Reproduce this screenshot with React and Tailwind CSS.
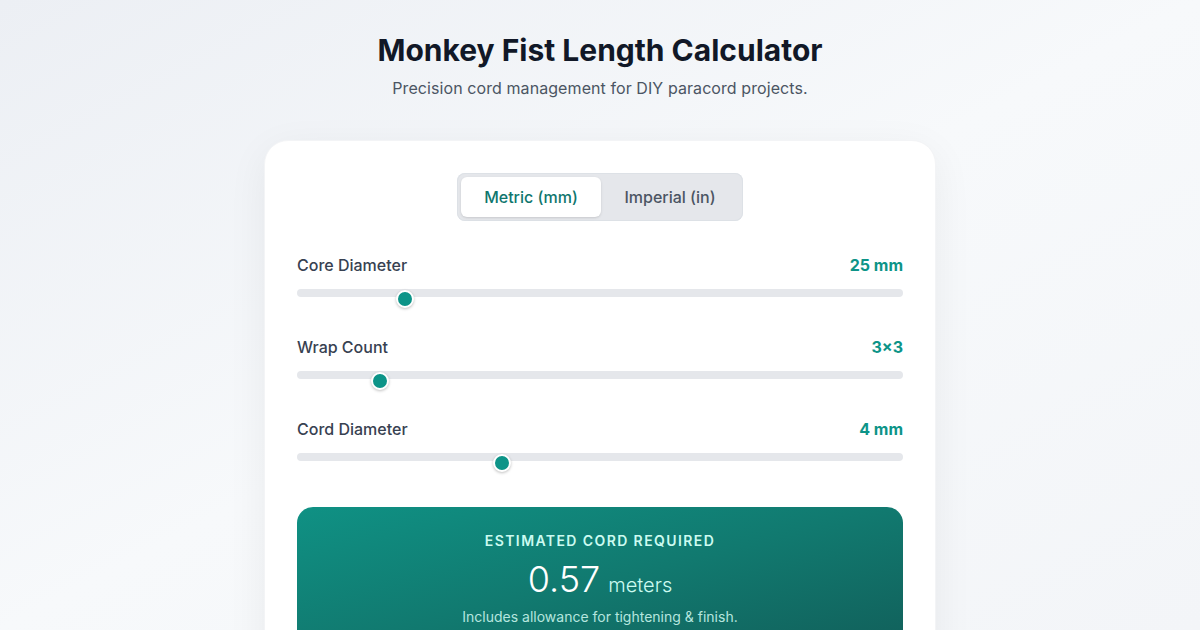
export default function App() {
  const rows = [
    { label: "Core Diameter", value: "25 mm", left: "left-[99px]" },
    { label: "Wrap Count", value: "3×3", left: "left-[74px]" },
    { label: "Cord Diameter", value: "4 mm", left: "left-[196px]" },
  ];
  return (
    <div
      className="w-[1200px] h-[630px] overflow-hidden bg-gradient-to-br from-[#eceff4] via-[#f7f9fb] to-[#f3f5f8] flex flex-col items-center pt-8"
      style={{ fontFamily: "Inter, 'Noto Sans', sans-serif" }}
    >
      <h1 className="text-[30px] leading-9 font-bold text-[#111827]">
        Monkey Fist Length Calculator
      </h1>
      <p className="mt-2 text-base leading-6 text-[#4b5563] tracking-[0.005em]">
        Precision cord management for DIY paracord projects.
      </p>
      <div className="mt-10 w-[672px] bg-white rounded-3xl border border-[#f3f4f6] shadow-[0_10px_40px_rgba(15,23,42,0.06)] p-8 shrink-0">
        <div className="flex justify-center">
          <div className="flex p-1 rounded-lg bg-[#e5e7eb] shadow-[inset_0_0_0_1px_#dde1e6]">
            <button className="w-[140px] py-2 rounded-md bg-white text-[#0f766e] font-medium text-base leading-6 shadow-sm">
              Metric (mm)
            </button>
            <button className="w-[138px] py-2 rounded-md text-[#4b5563] font-medium text-base leading-6">
              Imperial (in)
            </button>
          </div>
        </div>
        <div className="mt-8 flex flex-col gap-[38px]">
          {rows.map((r) => (
            <div key={r.label}>
              <div className="flex justify-between items-center leading-6">
                <span className="text-base font-medium text-[#374151]">{r.label}</span>
                <span className="text-base font-bold text-[#0d9488]">{r.value}</span>
              </div>
              <div className="relative mt-3 h-2 rounded-full bg-[#e5e7eb]">
                <div
                  className={`absolute top-[1px] ${r.left} w-[18px] h-[18px] rounded-full bg-[#0d9488] border-2 border-white shadow-[0_1px_3px_rgba(0,0,0,0.25)]`}
                />
              </div>
            </div>
          ))}
        </div>
        <div className="mt-[46px] rounded-2xl bg-gradient-to-br from-[#0f9184] via-[#11796f] to-[#115e59] pt-6 pb-8 flex flex-col items-center text-center">
          <div className="text-sm leading-5 font-semibold tracking-[0.1em] text-[#ccfbf1]">
            ESTIMATED CORD REQUIRED
          </div>
          <div className="mt-2 flex items-baseline gap-2 leading-10">
            <span className="text-[36px] font-light text-white">0.57</span>
            <span className="text-xl font-light text-[#ccfbf1]">meters</span>
          </div>
          <div className="mt-2 text-sm leading-5 text-[#b5e6df]">
            Includes allowance for tightening &amp; finish.
          </div>
        </div>
      </div>
    </div>
  );
}
